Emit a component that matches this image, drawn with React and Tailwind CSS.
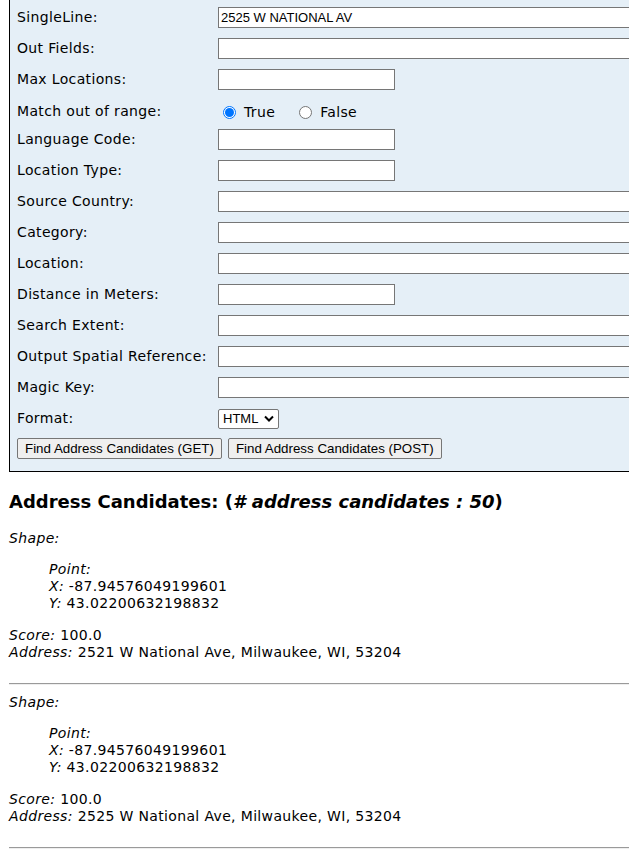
import React from "react";

const rows = [
  { label: "SingleLine:", type: "wide", value: "2525 W NATIONAL AV" },
  { label: "Out Fields:", type: "wide" },
  { label: "Max Locations:", type: "short" },
  { label: "Match out of range:", type: "radio" },
  { label: "Language Code:", type: "short" },
  { label: "Location Type:", type: "short" },
  { label: "Source Country:", type: "wide" },
  { label: "Category:", type: "wide" },
  { label: "Location:", type: "wide" },
  { label: "Distance in Meters:", type: "short" },
  { label: "Search Extent:", type: "wide" },
  { label: "Output Spatial Reference:", type: "wide" },
  { label: "Magic Key:", type: "wide" },
  { label: "Format:", type: "select" },
];

const arial = { fontFamily: '"Liberation Sans", Arial, sans-serif', letterSpacing: 0 };

function Field({ row }) {
  if (row.type === "wide" || row.type === "short") {
    return (
      <div
        className={`h-[21px] border border-[#767676] bg-white px-[2px] flex items-center text-[13px] text-black ${
          row.type === "wide" ? "w-[600px]" : "w-[177px]"
        }`}
        style={arial}
      >
        {row.value || ""}
      </div>
    );
  }
  if (row.type === "radio") {
    return (
      <div className="flex items-center pt-[2px]">
        <span className="ml-[5px] w-[13px] h-[13px] rounded-full border-[1px] border-[#0075ff] bg-white flex items-center justify-center">
          <span className="w-[9px] h-[9px] rounded-full bg-[#0075ff]" />
        </span>
        <span className="ml-[8px]">True</span>
        <span className="ml-[24px] w-[13px] h-[13px] rounded-full border border-[#767676] bg-white" />
        <span className="ml-[8px]">False</span>
      </div>
    );
  }
  return (
    <div
      className="h-[20px] w-[61px] border border-[#767676] rounded-[2px] bg-white flex items-center pl-[4px] text-[13px] text-black"
      style={arial}
    >
      <span>HTML</span>
      <svg className="ml-[6px]" width="10" height="7" viewBox="0 0 10 7">
        <path d="M1 1.5 L5 5.5 L9 1.5" fill="none" stroke="#000" strokeWidth="2" />
      </svg>
    </div>
  );
}

function Btn({ children }) {
  return (
    <div
      className="h-[21px] border border-[#767676] rounded-[2px] bg-[#efefef] px-[7px] flex items-center text-[13.33px] text-black"
      style={arial}
    >
      {children}
    </div>
  );
}

function Candidate({ x, y, score, address }) {
  return (
    <div className="leading-[17px]">
      <div className="pt-[1px]">
        <i>Shape:</i>
      </div>
      <div className="pl-[40px] pt-[14px]">
        <div>
          <i>Point:</i>
        </div>
        <div>
          <i>X:</i> {x}
        </div>
        <div>
          <i>Y:</i> {y}
        </div>
      </div>
      <div className="pt-[15px]">
        <i>Score:</i> {score}
      </div>
      <div>
        <i>Address:</i> {address}
      </div>
      <div className="h-[22px]" />
      <div className="h-[2px] border-t border-[#9a9a9a] bg-[#eeeeee] mb-[8px]" />
    </div>
  );
}

export default function App() {
  return (
    <div
      className="w-[629px] h-[857px] overflow-hidden bg-white text-black text-[14px] tracking-[0.35px]"
      style={{ fontFamily: '"DejaVu Sans", Verdana, sans-serif' }}
    >
      <div className="pl-[9px]">
        <div className="w-[800px] bg-[#e5eff7] border-l border-b border-r border-black pl-[7px] pt-[2px] pb-[12px]">
          {rows.map((r) => (
            <div
              key={r.label}
              className={`flex items-center ${r.type === "radio" ? "h-[26px] mt-[3px]" : "h-[31px]"}`}
            >
              <div className="w-[201px] shrink-0">{r.label}</div>
              <Field row={r} />
            </div>
          ))}
          <div className="flex gap-[6px] pt-[4px]">
            <Btn>Find Address Candidates (GET)</Btn>
            <Btn>Find Address Candidates (POST)</Btn>
          </div>
        </div>
        <h2 className="text-[18px] font-bold mt-[18px] mb-[15px] leading-[24px] tracking-normal">
          Address Candidates: (<i># address candidates : 50</i>)
        </h2>
        <Candidate
          x="-87.94576049199601"
          y="43.02200632198832"
          score="100.0"
          address="2521 W National Ave, Milwaukee, WI, 53204"
        />
        <Candidate
          x="-87.94576049199601"
          y="43.02200632198832"
          score="100.0"
          address="2525 W National Ave, Milwaukee, WI, 53204"
        />
      </div>
    </div>
  );
}
